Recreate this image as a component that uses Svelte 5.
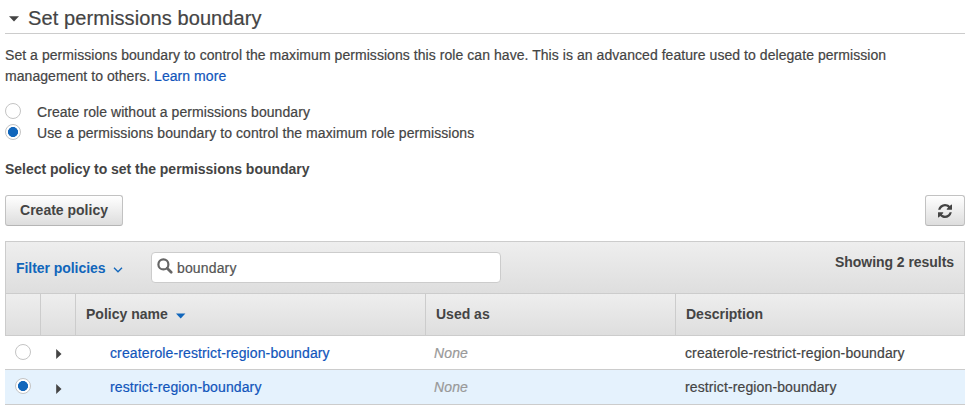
<script>
  let boundaryMode = $state('use');
  let selected = $state('restrict-region-boundary');
  let query = $state('boundary');
  const modes = [
    { id: 'none', label: 'Create role without a permissions boundary' },
    { id: 'use', label: 'Use a permissions boundary to control the maximum role permissions' }
  ];
  const policies = [
    { name: 'createrole-restrict-region-boundary', used: 'None' },
    { name: 'restrict-region-boundary', used: 'None' }
  ];
</script>

<main>
  <header>
    <svg class="caret" width="10" height="6" viewBox="0 0 10 6"><path d="M0 .3h10L5 5.5z" fill="#444" /></svg>
    <h1>Set permissions boundary</h1>
  </header>

  <p class="intro">
    Set a permissions boundary to control the maximum permissions this role can have. This is an advanced feature used to delegate permission<br />
    management to others. <a href="#learn">Learn more</a>
  </p>

  <div class="modes">
    {#each modes as mode}
      <label>
        <input type="radio" name="mode" value={mode.id} bind:group={boundaryMode} />
        <span>{mode.label}</span>
      </label>
    {/each}
  </div>

  <h2>Select policy to set the permissions boundary</h2>

  <div class="actions">
    <button class="create"><span>Create policy</span></button>
    <button class="refresh" aria-label="Refresh">
      <svg width="14" height="14" viewBox="0 0 1536 1536"><path fill="#444" d="M1511 928q0 5-1 7-64 268-268 434.500T764 1536q-146 0-282.500-55T238 1324l-129 129q-19 19-45 19t-45-19-19-45V960q0-26 19-45t45-19h448q26 0 45 19t19 45-19 45l-137 137q71 66 161 102t187 36q134 0 250-65t186-179q11-17 53-117 8-23 30-23h192q13 0 22.500 9.500t9.500 22.500zm25-800v448q0 26-19 45t-45 19h-448q-26 0-45-19t-19-45 19-45l138-138Q969 256 768 256q-134 0-250 65T332 500q-11 17-53 117-8 23-30 23H50q-13 0-22.500-9.500T18 608v-7q65-268 270-434.500T768 0q146 0 284 55.500T1297 212l130-129q19-19 45-19t45 19 19 45z" /></svg>
    </button>
  </div>

  <section class="table">
    <div class="filter">
      <a class="filter-link" href="#filter">Filter policies</a>
      <svg class="chevron" width="10" height="6" viewBox="0 0 10 6"><path d="M1 .8l4 4 4-4" fill="none" stroke="#1166bb" stroke-width="1.3" /></svg>
      <div class="search">
        <svg width="16" height="16" viewBox="0 0 16 16" fill="none" stroke="#666"><circle cx="6.4" cy="6.4" r="5" stroke-width="2.2" /><path d="M10.200 10.200l4 4" stroke-width="2.700" stroke-linecap="round" /></svg>
        <input type="text" aria-label="Search" bind:value={query} />
      </div>
      <strong class="count">Showing 2 results</strong>
    </div>
    <div class="row head">
      <div></div>
      <div></div>
      <div><span>Policy name</span><svg class="sort" width="10" height="6" viewBox="0 0 10 6"><path d="M0 .4h9.400L4.700 5.600z" fill="#1166bb" /></svg></div>
      <div><span>Used as</span></div>
      <div><span>Description</span></div>
    </div>
    {#each policies as policy}
      <div class="row item" class:selected={selected === policy.name}>
        <div><input type="radio" name="policy" aria-label={policy.name} value={policy.name} bind:group={selected} /></div>
        <div><svg class="expand" width="6" height="10" viewBox="0 0 6 10"><path d="M.2 0L5.500 5L.2 10z" fill="#444" /></svg></div>
        <div><a href="#policy">{policy.name}</a></div>
        <div><em>{policy.used}</em></div>
        <div><span>{policy.name}</span></div>
      </div>
    {/each}
  </section>
</main>

<style>
  :global(body) { margin: 0; background: #fff; }
  main {
    box-sizing: border-box;
    width: 973px;
    height: 414px;
    padding: 0 8px 0 5px;
    overflow: hidden;
    font: 14px/21px "Liberation Sans", Arial, sans-serif;
    color: #444;
    -webkit-text-stroke: 0.2px;
  }
  a { color: #1155bb; text-decoration: none; }
  header {
    display: flex;
    align-items: center;
    box-sizing: border-box;
    height: 34px;
    border-bottom: 1px solid #ccc;
  }
  .caret { margin: 5px 9px 0 4px; }
  h1 { margin: 3px 0 0; font-size: 20px; line-height: 24px; font-weight: 400; letter-spacing: 0.1px; white-space: nowrap; }
  .intro { margin: 11px 0 0; letter-spacing: 0.055px; white-space: nowrap; }
  .modes { display: flex; flex-direction: column; margin-top: 15px; }
  label { display: flex; align-items: center; height: 21px; letter-spacing: 0.07px; white-space: nowrap; }
  label input { margin: -3px 16px 0 0; }
  input[type='radio'] {
    appearance: none;
    flex: none;
    box-sizing: border-box;
    width: 16px;
    height: 16px;
    border: 1px solid #c4c4c4;
    border-radius: 50%;
    background: #fff;
  }
  input[type='radio']:checked { background: radial-gradient(circle, #1166bb 4.700px, #fff 5.300px); }
  h2, .actions, .table strong, .head, .filter-link { -webkit-text-stroke: 0; }
  h2 { margin: 15px 0 0; font-size: 14px; line-height: 21px; letter-spacing: -0.03px; }
  .actions { display: flex; justify-content: space-between; margin-top: 15px; }
  button {
    display: flex;
    align-items: center;
    justify-content: center;
    box-sizing: border-box;
    height: 31px;
    padding: 0;
    border: 1px solid #c2c2c2;
    border-bottom-color: #b5b5b5;
    border-radius: 3px;
    background: linear-gradient(#fff, #ddd);
    color: #444;
    font: bold 14px/21px "Liberation Sans", Arial, sans-serif;
    white-space: nowrap;
  }
  .create { width: 118px; }
  .refresh { width: 40px; }
  .table { margin-top: 15px; }
  .filter {
    display: flex;
    box-sizing: border-box;
    height: 52px;
    border: 1px solid #ccc;
    border-bottom: 0;
    padding: 0 10px;
    background: linear-gradient(#eee, #dedede);
  }
  .filter-link { width: 97px; margin-top: 16px; font-weight: 700; color: #1166bb; letter-spacing: -0.05px; white-space: nowrap; }
  .chevron { margin-top: 25px; }
  .search {
    display: flex;
    box-sizing: border-box;
    width: 350px;
    height: 31px;
    margin: 10px 0 0 28px;
    padding-left: 5px;
    border: 1px solid #ccc;
    border-radius: 4px;
    background: #fff;
  }
  .search svg { margin-top: 5px; }
  .search input {
    width: 300px;
    margin-left: 4px;
    padding: 1px 0 0;
    border: 0;
    outline: 0;
    background: transparent;
    color: #555;
    font: inherit;
    letter-spacing: 0.15px;
  }
  .count { margin: 10px 0 0 auto; letter-spacing: -0.05px; white-space: nowrap; }
  .row { display: grid; grid-template-columns: 35px 35px 350px 250px 1fr; box-sizing: border-box; }
  .head {
    height: 43px;
    border: 1px solid #ccc;
    border-left: 0;
    background: linear-gradient(#eee, #dedede);
    font-weight: 700;
  }
  .head div { display: flex; align-items: center; padding-left: 10px; border-left: 1px solid #ccc; white-space: nowrap; }
  .sort { margin: 3px 0 0 8px; }
  .item { height: 34px; border-bottom: 1px solid #ccc; }
  .item:last-child { height: 35px; }
  .item div { display: flex; align-items: center; letter-spacing: 0.12px; white-space: nowrap; }
  .item:not(:last-child) :is(a, em, span) { margin-top: 2px; }
  .selected { background: #e5f2fd; }
  .item input { margin: -2px 0 0 10px; }
  .expand { margin: 3px 0 0 16px; }
  .item a { margin-left: 35px; }
  .item em { margin-left: 9px; color: #999; }
  .item div:last-child span { margin-left: 10px; }
</style>
